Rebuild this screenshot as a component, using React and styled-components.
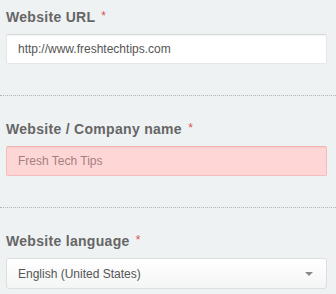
import React from "react";
import styled, { createGlobalStyle } from "styled-components";

const GlobalStyle = createGlobalStyle`
  html, body {
    margin: 0;
    padding: 0;
    background: #eef2f3;
  }
  body {
    font-family: "Liberation Sans", Arial, sans-serif;
  }
`;

const Form = styled.div`
  width: 336px;
  background: #eef2f3;
`;

const Section = styled.div`
  padding: ${({ first }) => (first ? "9px" : "25px")} 9px
    ${({ last }) => (last ? "6px" : "31px")} 6px;
  border-bottom: ${({ last }) => (last ? "none" : "1px dotted #aeb6b9")};
`;

const Label = styled.label`
  display: block;
  font-size: 14px;
  line-height: 17px;
  height: 17px;
  font-weight: bold;
  letter-spacing: 0.3px;
  color: #666;
  margin-bottom: 8px;
`;

const Required = styled.span`
  color: #d9534f;
  font-weight: normal;
  font-size: 12px;
  line-height: 0;
  margin-left: 2px;
  vertical-align: 2px;
`;

const TextInput = styled.input`
  box-sizing: border-box;
  display: block;
  width: 321px;
  height: 30px;
  margin: 0;
  padding: 0 11px;
  font-family: "Liberation Sans", Arial, sans-serif;
  font-size: 12px;
  color: ${({ invalid }) => (invalid ? "#a27f80" : "#555")};
  background: ${({ invalid }) => (invalid ? "#ffd6d6" : "#fff")};
  border: 1px solid ${({ invalid }) => (invalid ? "#f6bcbc" : "#e4e7e8")};
  border-top-color: ${({ invalid }) => (invalid ? "#f3b3b3" : "#d4d8d9")};
  border-radius: 2px;
  box-shadow: inset 0 1px 1px rgba(0, 0, 0, 0.04);
  outline: none;
`;

const Select = styled.div`
  box-sizing: border-box;
  display: flex;
  align-items: center;
  justify-content: space-between;
  width: 321px;
  height: 31px;
  padding: 0 13px 0 11px;
  font-size: 12px;
  color: #555;
  background: linear-gradient(#ffffff, #f4f5f5);
  border: 1px solid #dcdfe0;
  border-radius: 3px;
`;

const Caret = styled.span`
  width: 0;
  height: 0;
  border-left: 4px solid transparent;
  border-right: 4px solid transparent;
  border-top: 4px solid #8a8a8a;
`;

export default function App() {
  return (
    <>
      <GlobalStyle />
      <Form>
        <Section first>
          <Label>
            Website URL <Required>*</Required>
          </Label>
          <TextInput defaultValue="http://www.freshtechtips.com" />
        </Section>
        <Section>
          <Label>
            Website / Company name <Required>*</Required>
          </Label>
          <TextInput invalid defaultValue="Fresh Tech Tips" />
        </Section>
        <Section last>
          <Label>
            Website language <Required>*</Required>
          </Label>
          <Select>
            <span>English (United States)</span>
            <Caret />
          </Select>
        </Section>
      </Form>
    </>
  );
}
